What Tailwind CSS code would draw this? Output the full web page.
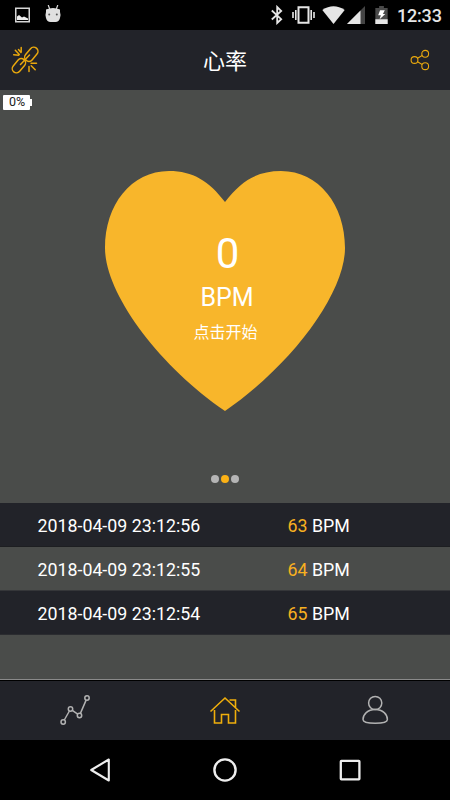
<!DOCTYPE html>
<html lang="zh-CN">
<head>
<meta charset="utf-8">
<title>心率</title>
<script src="https://cdn.jsdelivr.net/npm/@tailwindcss/browser@4"></script>
</head>
<body class="bg-black">
<div class="flex h-[800px] w-[450px] flex-col overflow-hidden bg-[#4a4c4a] font-[Roboto,'Noto_Sans_CJK_SC',sans-serif] text-white">
  <!-- Status bar -->
  <div class="flex h-[30px] shrink-0 items-center bg-black pr-[10px] pl-[15px] text-[#e6e6e6]">
    <svg class="h-[16px] w-[15px]" viewBox="0 0 15 16"><path d="M.75 1.25h13.5v13.5H.75z" fill="none" stroke="#d6d6d6" stroke-width="1.5"/><path d="M2 13v-3.5l2-1.5 3 2.5 2-1 4 2V13z" fill="#eee"/></svg>
    <svg class="mb-[3px] ml-[15px] h-[18px] w-[16px]" viewBox="0 0 16 18"><path d="M3.2 0l1.5 4M12.8 0l-1.500 4" stroke="#d8d8d8" stroke-width="1.2"/><path d="M1 4.500Q8 1.500 15 4.500V7Q16 9.500 15 13Q14 17 10.500 17H5.500Q2 17 1 13Q0 9.500 1 7z" fill="#e0e0e0"/><circle cx="4.200" cy="9.500" r="1" fill="#555"/><circle cx="11.800" cy="9.500" r="1" fill="#555"/></svg>
    <svg class="ml-auto h-[20px] w-[12px]" viewBox="0 0 12 20"><path d="M.8 5.500l9.400 8.700L6.200 18V2l4 4L.8 14.500" fill="none" stroke="currentColor" stroke-width="1.800"/></svg>
    <svg class="ml-[9px] h-[18px] w-[23px]" viewBox="0 0 23 18"><path d="M6.500 1.300h10v15.400h-10z" fill="none" stroke="currentColor" stroke-width="2"/><path d="M3.800 4v10M1 6v6M19.200 4v10M22 6v6" stroke="currentColor" stroke-width="1.600"/></svg>
    <svg class="ml-[6.500px] h-[18px] w-[23px]" viewBox="0 0 23 18"><path d="M.3 4Q11.500-3.500 22.700 4L11.500 18z" fill="currentColor"/></svg>
    <svg class="ml-[2px] h-[18px] w-[18px]" viewBox="0 0 18 18"><path d="M0 18L18 0v18z" fill="#444"/><path d="M0 18L13.500 4.500V18z" fill="currentColor"/></svg>
    <svg class="ml-[10px] h-[18px] w-[13px]" viewBox="0 0 13 19"><path d="M4 0h5v2h4v17H0V2h4z" fill="#4a4a4a"/><path d="M0 14h13v5H0z" fill="currentColor"/><path d="M5 4.500h5L8 8.500h2.500L4.500 14l1.300-4.200H3z" fill="#fff"/></svg>
    <span class="ml-[9.500px] w-[43px] pt-[2px] text-[18px] leading-none font-medium tracking-[-0.2px] whitespace-nowrap">12:33</span>
  </div>
  <!-- Title bar -->
  <header class="flex h-[60px] shrink-0 items-center justify-between bg-[#222329] pr-[20px] pl-[11px]">
    <svg class="h-[28px] w-[28px]" viewBox="0 0 28 28" fill="none" stroke="#e9a80d" stroke-width="1.500" stroke-linecap="round">
      <rect x="-8" y="-4.200" width="16" height="8.400" rx="4.200" transform="translate(20.300 8.300) rotate(-50)"/>
      <rect x="-8" y="-4.200" width="16" height="8.400" rx="4.200" transform="translate(7.900 19.700) rotate(-50)"/>
      <path d="M9.500 18.500l9-9.500"/>
      <path d="M2.700 8.800l5 .4M4.300 4.300l4 4.200M10.200 1.500v4.800M7.500 3.500l2.500 3M20 17.300h5.500M20.200 19.800l4 4M18 20.500v5"/>
    </svg>
    <h1 class="pt-[3px] pl-[1px] text-[22px] leading-none font-normal">心率</h1>
    <svg class="h-[22px] w-[20px]" viewBox="0 0 20 22" fill="none" stroke="#e9a80d" stroke-width="1.100"><circle cx="4.500" cy="11" r="3.400"/><circle cx="15.200" cy="4.800" r="3.400"/><circle cx="15.200" cy="17.200" r="3.400"/><path d="M7.500 9.200l4.700-2.700M7.500 12.800l4.700 2.700"/></svg>
  </header>
  <!-- Heart rate panel -->
  <main class="flex h-[413px] shrink-0 flex-col">
    <div class="mt-[4px] ml-[3px] flex h-[16px] items-center">
      <span class="flex h-[15px] w-[27px] items-center justify-center rounded-[1px] bg-white pt-px pl-px text-[12.500px] leading-none text-[#222]">0%</span><i class="h-[7px] w-[2px] bg-white"></i>
    </div>
    <div class="relative mx-auto mt-[61px] h-[240px] w-[240px]">
      <svg class="h-[240px] w-[240px]" viewBox="0 0 240 240"><path d="M120 31C104 10 88 0 64 0C26 0 0 34 0 77C0 122 53 194 120 240C187 194 240 122 240 77C240 34 214 0 176 0C152 0 136 10 120 31Z" fill="#f8b62b"/></svg>
      <div class="absolute inset-x-0 top-[62px] flex flex-col items-center">
        <span class="pl-[5px] text-[42px] leading-[42px]">0</span>
        <span class="mt-[10px] pl-[4px] text-[25px] leading-[26px]">BPM</span>
        <span class="mt-[12px] pl-px text-[16px] leading-[20px]">点击开始</span>
      </div>
    </div>
    <div class="mt-[64px] flex justify-center gap-[2px]">
      <i class="h-[8px] w-[8px] rounded-full bg-[#b5b5b5]"></i><i class="h-[8px] w-[8px] rounded-full bg-[#fbb116]"></i><i class="h-[8px] w-[8px] rounded-full bg-[#b5b5b5]"></i>
    </div>
  </main>
  <!-- History -->
  <section class="h-[176px] shrink-0 text-[17.800px] leading-none">
    <div class="flex h-[44px] items-center border-b border-[#1d1e21] bg-[#222329] pt-[2px] pl-[37.500px]"><span class="w-[250px]">2018-04-09 23:12:56</span><span><b class="font-normal text-[#f8b020]">63</b> BPM</span></div>
    <div class="flex h-[44px] items-center border-b border-[#353639] pt-[2px] pl-[37.500px]"><span class="w-[250px]">2018-04-09 23:12:55</span><span><b class="font-normal text-[#f8b020]">64</b> BPM</span></div>
    <div class="flex h-[44px] items-center border-b border-[#2b2c30] bg-[#222329] pt-[2px] pl-[37.500px]"><span class="w-[250px]">2018-04-09 23:12:54</span><span><b class="font-normal text-[#f8b020]">65</b> BPM</span></div>
  </section>
  <!-- Tabs -->
  <nav class="grid h-[61px] shrink-0 grid-cols-3 place-items-center border-t border-[#8a8a8a] bg-[#222329] shadow-[inset_0_1px_0_#000]">
    <svg class="h-[32px] w-[32px]" viewBox="0 0 32 32" fill="none" stroke="#b2b2b2" stroke-width="1.500"><circle cx="4.200" cy="28" r="2.200"/><circle cx="11.500" cy="15" r="2.200"/><circle cx="20.500" cy="21.500" r="2.200"/><circle cx="28" cy="4" r="2.200"/><path d="M5.300 26l5.100-9M13.300 16.300l5.400 3.900M21.400 19.400l5.700-13.300"/></svg>
    <svg class="h-[32px] w-[32px]" viewBox="0 0 32 32" fill="none" stroke="#efae0c" stroke-width="1.600"><path d="M1.500 17.500L16 4l14.500 13.500M5.500 16v13h7v-8.500h7V29h7V16M20.500 6h6v7.500"/></svg>
    <svg class="h-[32px] w-[28px]" viewBox="0 0 28 32" fill="none" stroke="#b2b2b2" stroke-width="1.500"><circle cx="14.200" cy="9" r="6.600"/><path d="M14.200 15.500C6.500 15.500 2 20.500 2 25.500Q2 29.300 14.200 29.300T26.400 25.500C26.400 20.500 22 15.500 14.200 15.500z"/></svg>
  </nav>
  <!-- System navigation -->
  <div class="grid h-[60px] shrink-0 grid-cols-[200px_50px_200px] place-items-center bg-black text-[#eee]">
    <svg class="h-[26px] w-[22px]" viewBox="0 0 22 26"><path d="M19.800 2.500v21L2.200 13z" fill="none" stroke="currentColor" stroke-width="2.100" stroke-linejoin="round"/></svg>
    <svg class="h-[26px] w-[26px]" viewBox="0 0 26 26"><circle cx="13" cy="13" r="10.600" fill="none" stroke="currentColor" stroke-width="2.400"/></svg>
    <svg class="h-[24px] w-[24px]" viewBox="0 0 24 24"><rect x="2.800" y="2.800" width="18.600" height="18.600" rx=".6" fill="none" stroke="currentColor" stroke-width="2.300"/></svg>
  </div>
</div>
</body>
</html>
